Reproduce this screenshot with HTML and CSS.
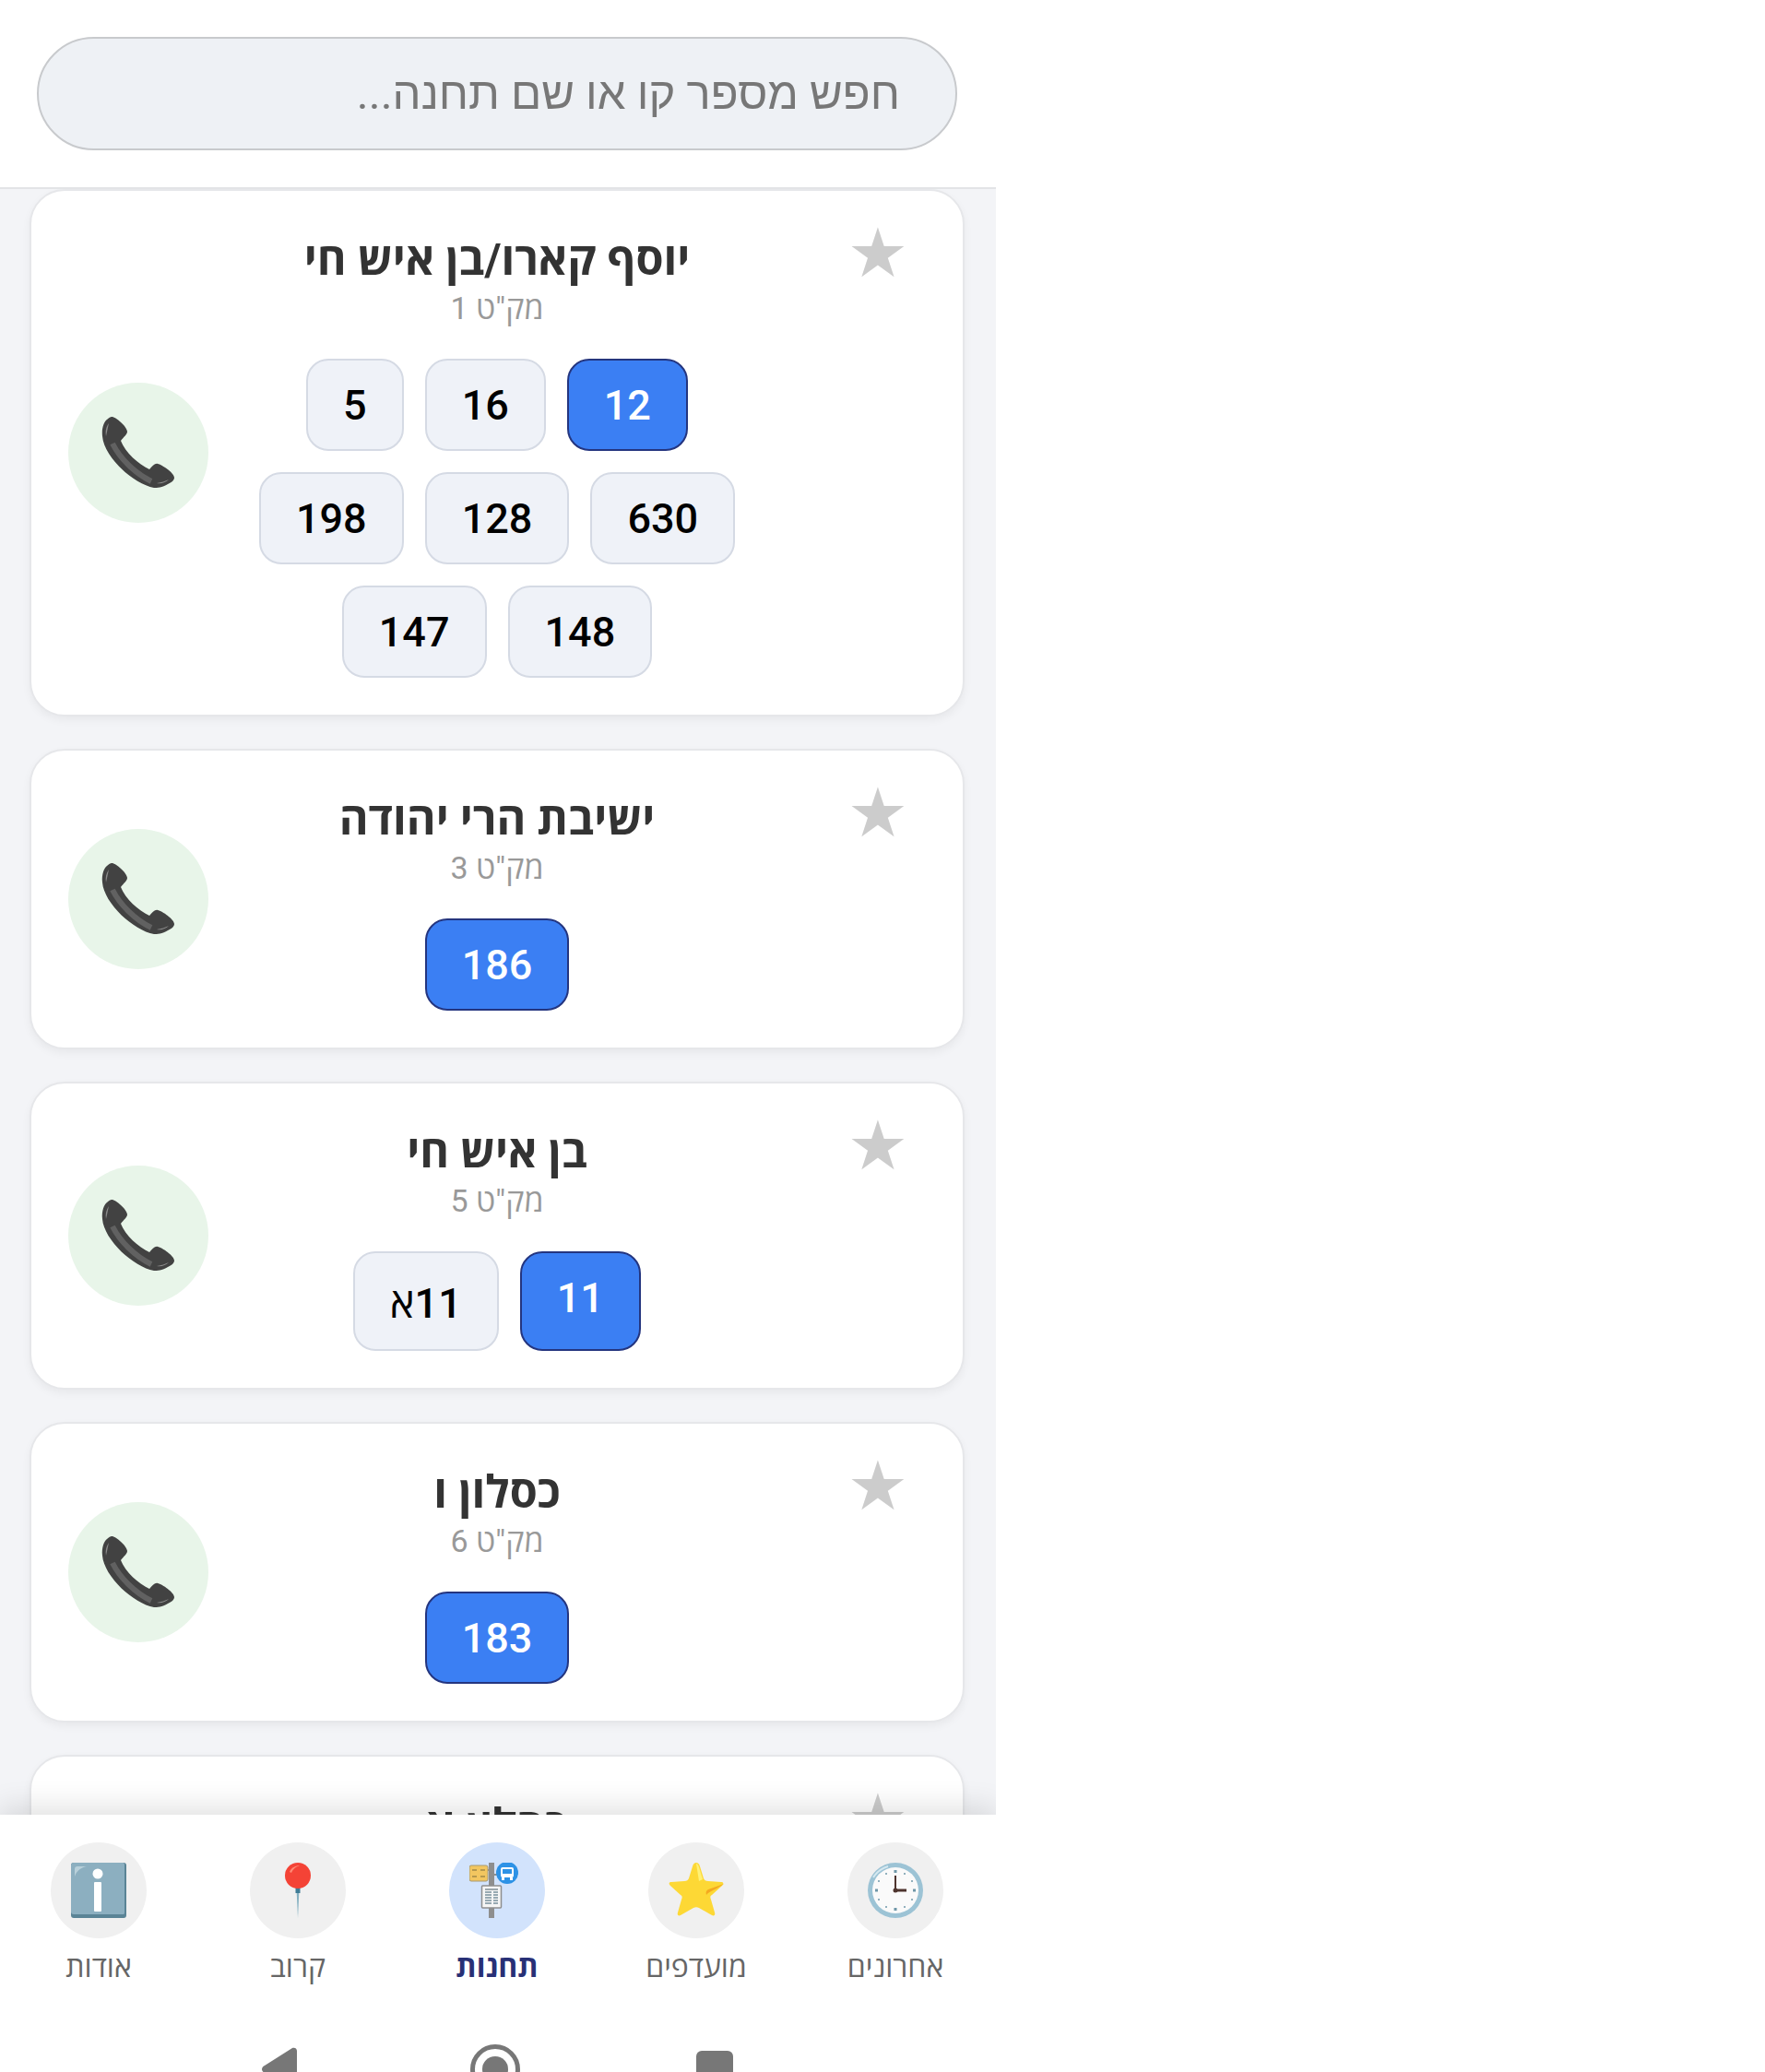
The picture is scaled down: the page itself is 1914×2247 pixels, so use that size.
FILE: index.html
```html
<!DOCTYPE html>
<html lang="he">
<head>
<meta charset="utf-8">
<title>תחנות</title>
<link rel="stylesheet" href="styles.css">
</head>
<body>
<div class="app" dir="rtl">
  <header class="top">
    <input class="search" type="text" placeholder="חפש מספר קו או שם תחנה...">
  </header>
  <main class="list">
    <article class="card">
      <span class="fav">★</span>
      <h2 class="name">יוסף קארו/בן איש חי</h2>
      <p class="code">מק"ט 1</p>
      <div class="lines">
        <span class="line on">12</span><span class="line">16</span><span class="line">5</span>
        <span class="line">630</span><span class="line">128</span><span class="line">198</span>
        <span class="line">148</span><span class="line">147</span>
      </div>
      <button class="call"><svg class="phone" viewBox="0 0 80 80"><use href="#handset"/></svg></button>
    </article>
    <article class="card">
      <span class="fav">★</span>
      <h2 class="name">ישיבת הרי יהודה</h2>
      <p class="code">מק"ט 3</p>
      <div class="lines"><span class="line on">186</span></div>
      <button class="call"><svg class="phone" viewBox="0 0 80 80"><use href="#handset"/></svg></button>
    </article>
    <article class="card">
      <span class="fav">★</span>
      <h2 class="name">בן איש חי</h2>
      <p class="code">מק"ט 5</p>
      <div class="lines"><span class="line on">11</span><span class="line">11א</span></div>
      <button class="call"><svg class="phone" viewBox="0 0 80 80"><use href="#handset"/></svg></button>
    </article>
    <article class="card">
      <span class="fav">★</span>
      <h2 class="name">כסלון ו</h2>
      <p class="code">מק"ט 6</p>
      <div class="lines"><span class="line on">183</span></div>
      <button class="call"><svg class="phone" viewBox="0 0 80 80"><use href="#handset"/></svg></button>
    </article>
    <article class="card">
      <span class="fav">★</span>
      <h2 class="name">כסלון א</h2>
    </article>
  </main>
  <nav class="tabs">
    <div class="tab">
      <span class="disc"><svg class="ico" viewBox="0 0 60 60">
        <circle cx="30" cy="30" r="30" fill="#9cc3d5"/>
        <path d="M6 16a28 28 0 0 1 16-12" stroke="#d5e8f0" stroke-width="2" fill="none"/>
        <circle cx="30" cy="30" r="25" fill="#fafafa"/>
        <g fill="#6f97a8"><rect x="28.500" y="8" width="3" height="3"/><rect x="28.500" y="49" width="3" height="3"/><rect x="8" y="28.500" width="3" height="3"/><rect x="49" y="28.500" width="3" height="3"/><circle cx="40" cy="12" r="1"/><circle cx="20" cy="12" r="1"/><circle cx="40" cy="48" r="1"/><circle cx="20" cy="48" r="1"/><circle cx="12" cy="20" r="1"/><circle cx="48" cy="20" r="1"/><circle cx="12" cy="40" r="1"/><circle cx="48" cy="40" r="1"/></g>
        <path d="M30 14V30" stroke="#4e342e" stroke-width="2" fill="none"/>
        <path d="M30 30H42" stroke="#4e342e" stroke-width="3"/>
        <circle cx="30" cy="30" r="2.500" fill="#4e342e"/>
      </svg></span>
      <span class="label">אחרונים</span>
    </div>
    <div class="tab">
      <span class="disc"><svg class="ico" viewBox="0 0 60 60">
        <path d="M30 0C32 0 33 1 34 4L38 17C39 19 40 20 43 20L57 21C60 21 60 23 58 25L47 35C45 36 45 38 46 40L50 54C51 57 49 58 47 57L33 49C31 48 29 48 27 49L13 57C11 58 9 57 10 54L14 40C15 38 15 36 13 35L2 25C0 23 0 21 3 21L17 20C20 20 21 19 22 17L26 4C27 1 28 0 30 0Z" fill="#fdd835"/>
        <path d="M30 1C31 1 32 2 33 5L37 18 33 20Z" fill="#fff176"/>
        <path d="M60 23L43 29C41 30 40 32 41 35C44 31 52 29 60 23Z" fill="#f4a91f"/>
      </svg></span>
      <span class="label">מועדפים</span>
    </div>
    <div class="tab active">
      <span class="disc"><svg class="ico" viewBox="0 0 60 60">
        <rect x="21" y="0" width="6" height="60" fill="#8e8e8e"/>
        <rect x="14" y="7" width="10" height="2" fill="#8e8e8e"/>
        <rect x="25" y="12" width="8" height="2" fill="#8e8e8e"/>
        <rect x="0" y="3" width="20" height="17" rx="2" fill="#f2c660" stroke="#a89a72"/>
        <path d="M3 8H8M12 8H17M3 15H8M12 15H17" stroke="#7b6a3a" stroke-width="1.200"/>
        <circle cx="41" cy="11" r="12" fill="#2d92e6"/>
        <rect x="34" y="5" width="14" height="11" rx="2" fill="#fff"/>
        <rect x="36" y="7" width="10" height="5" fill="#2d92e6"/>
        <rect x="35" y="16" width="3" height="3" fill="#fff"/><rect x="44" y="16" width="3" height="3" fill="#fff"/>
        <rect x="13.500" y="25" width="21" height="24" rx="1" fill="#f5f5f5" stroke="#8e8e8e" stroke-width="1.500"/>
        <path d="M17 32H24M26 32H31M17 35H24M26 35H31M17 38H24M26 38H31M17 41H24M26 41H31M17 44H24M26 44H31" stroke="#78909c" stroke-width="1.500"/>
        <path d="M17 29H31" stroke="#455a64" stroke-width="1"/>
      </svg></span>
      <span class="label">תחנות</span>
    </div>
    <div class="tab">
      <span class="disc"><svg class="ico" viewBox="0 0 60 60">
        <path d="M28.500 28H31.500L30 60Z" fill="#84b0c1"/>
        <rect x="27.500" y="27" width="5" height="6" fill="#3f7c96"/>
        <circle cx="30" cy="14" r="14" fill="#f44336"/>
        <path d="M21 10C23 5 28 3 32 3C27 5 25 7 23 11Z" fill="#ff8a75"/>
      </svg></span>
      <span class="label">קרוב</span>
    </div>
    <div class="tab">
      <span class="disc"><svg class="ico" viewBox="0 0 60 60">
        <rect width="60" height="60" rx="3" fill="#5a8496"/>
        <path d="M3 0H56C58 0 58 1 58 3V54C58 56 57 56 56 56H3C1 56 0 55 0 53V3C0 1 1 0 3 0Z" fill="#8cafc0"/>
        <path d="M4 15V7C4 5 5 4 7 4H17C11 5 6 9 4 15Z" fill="#b8d0da"/>
        <circle cx="29" cy="12" r="5.500" fill="#fff"/>
        <rect x="25" y="21" width="8" height="32" rx="1" fill="#fff"/>
      </svg></span>
      <span class="label">אודות</span>
    </div>
  </nav>
  <div class="sysbar" dir="ltr">
    <svg class="sys back" viewBox="0 0 38 48"><path d="M38 4V44C38 47 35 48 33 47L3 28C-1 26 -1 22 3 20L33 1C35 0 38 1 38 4Z" fill="#777"/></svg>
    <svg class="sys home" viewBox="0 0 54 54"><circle cx="27" cy="27" r="24.500" fill="none" stroke="#777" stroke-width="5"/><circle cx="27" cy="27" r="14" fill="#777"/></svg>
    <span class="sq"></span>
  </div>
</div>
<svg class="defs" width="0" height="0" aria-hidden="true">
  <symbol id="handset" viewBox="0 0 80 80">
    <path d="M11 1C16 1 28 12 28 17C28 20 24 23 21 27C26 40 40 52 52 58C55 55 58 51 61 52C66 53 79 62 79 67C79 70 76 72 72 74C66 78 60 78 57 78C35 74 3 45 1 22C0 13 3 6 6 4C8 2 10 1 11 1Z" fill="#424242"/>
    <path d="M12 30C20 46 36 62 54 71" stroke="#616161" stroke-width="6" fill="none"/>
    <path d="M8 8C5 12 4 17 5 22C6 17 7 13 8 8ZM60 73C65 74 70 72 73 69C69 71 65 72 60 73Z" fill="#8a8a8a"/>
  </symbol>
</svg>
</body>
</html>
```
FILE: styles.css
```css
* { box-sizing: border-box; }
html, body { margin: 0; background: #fff; }
body { font-family: Roboto, "Noto Sans", "Open Sans", sans-serif; }
.app { width: 1080px; height: 2247px; display: flex; flex-direction: column; overflow: hidden; background: #f3f4f7; }
.top { flex: none; height: 205px; background: #fff; border-bottom: 2px solid #e3e4e6; padding: 40px 42px 0 40px; }
.search { display: block; width: 100%; height: 123px; border: 2px solid #c8cacd; border-radius: 62px; background: #eef1f5; padding: 0 60px; font: 400 49px Roboto, "Noto Sans", sans-serif; color: #333; direction: rtl; outline: none; }
.search::placeholder { color: #777; opacity: 1; }
.list { flex: 1; min-height: 0; overflow: hidden; padding: 0 34px 0 32px; display: flex; flex-direction: column; gap: 35px; }
.card { position: relative; flex: none; background: #fff; border: 2px solid #e6e7ea; border-radius: 38px; box-shadow: 0 4px 10px rgba(0,0,0,.05); padding: 45px 0 40px; display: flex; flex-direction: column; align-items: center; }
.fav { position: absolute; top: 23px; right: 59px; font: 400 74px/88px "DejaVu Sans", sans-serif; color: #ccc; }
.name { margin: 0; font-size: 48.500px; line-height: 60px; font-weight: 700; color: #333; text-align: center; }
.code { margin: 2px 0 0; font-size: 34px; line-height: 40px; color: #999; text-align: center; }
.lines { margin-top: 35px; max-width: 560px; display: flex; flex-wrap: wrap; justify-content: center; gap: 23px 23px; }
.line { padding: 21.500px 38px; border: 2px solid #d5dae4; border-radius: 24px; background: #eff2f8; color: #000; font-size: 45px; font-weight: 500; }
.line.on { background: #3b7ff3; border-color: #24357f; color: #fff; }
.call { position: absolute; left: 40px; top: 50%; transform: translateY(-50%); width: 152px; height: 152px; border: 0; border-radius: 50%; background: #e8f5e9; padding: 36px; }
.phone { display: block; width: 80px; height: 80px; }
.tabs { flex: none; height: 248px; background: #fff; box-shadow: 0 -8px 30px rgba(0,0,0,.12); display: flex; padding: 30px 1px 0 0; position: relative; }
.tab { flex: none; width: 216px; display: flex; flex-direction: column; align-items: center; }
.disc { width: 104px; height: 104px; border-radius: 50%; background: #f0f0f0; display: flex; align-items: center; justify-content: center; }
.ico { width: 60px; height: 60px; display: block; }
.tab.active .disc { background: #d2e3fc; }
.label { margin-top: 13px; font-size: 32px; line-height: 36px; color: #666; }
.tab.active .label { color: #283076; font-weight: 700; }
.sysbar { flex: none; height: 31px; background: #fff; display: flex; align-items: flex-start; padding-left: 284px; position: relative; }
.sys { display: block; flex: none; }
.back { width: 38px; height: 48px; margin-top: 4px; }
.home { width: 54px; height: 54px; margin: 1px 0 0 188px; }
.sq { flex: none; width: 40px; height: 40px; background: #777; border-radius: 6px; margin: 8px 0 0 191px; }
.defs { position: absolute; }
```
